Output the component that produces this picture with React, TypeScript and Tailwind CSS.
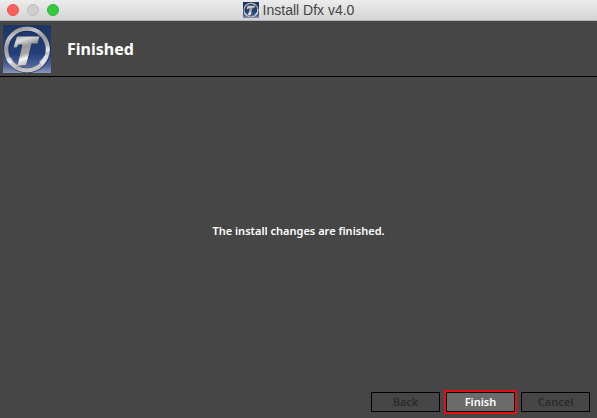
import { useId } from "react"

interface WizardButtonProps {
  label: string
  disabled?: boolean
}

function ProductLogo({ className }: { className: string }) {
  const id = useId()
  const sky = `${id}-sky`
  const ring = `${id}-ring`
  const letter = `${id}-letter`

  return (
    <svg className={className} viewBox="0 0 48 48" aria-hidden="true">
      <defs>
        <linearGradient id={sky} x1="0" y1="0" x2="0" y2="1">
          <stop offset="0" stopColor="#1c3563" />
          <stop offset="0.6" stopColor="#223f7c" />
          <stop offset="0.85" stopColor="#52649a" />
          <stop offset="1" stopColor="#8a97bd" />
        </linearGradient>
        <linearGradient id={ring} x1="0.1" y1="0" x2="0.4" y2="1">
          <stop offset="0" stopColor="#8b8d90" />
          <stop offset="0.2" stopColor="#c4c4c4" />
          <stop offset="0.4" stopColor="#96989a" />
          <stop offset="0.6" stopColor="#b2b3b5" />
          <stop offset="0.72" stopColor="#eeeeee" />
          <stop offset="0.82" stopColor="#a2a3a5" />
          <stop offset="1" stopColor="#c4c4c4" />
        </linearGradient>
        <linearGradient id={letter} x1="0" y1="0" x2="0.3" y2="1">
          <stop offset="0" stopColor="#a8a8a8" />
          <stop offset="0.2" stopColor="#dcdcdc" />
          <stop offset="0.42" stopColor="#999999" />
          <stop offset="0.66" stopColor="#a8a8a8" />
          <stop offset="0.8" stopColor="#f5f5f5" />
          <stop offset="1" stopColor="#bfbfbf" />
        </linearGradient>
      </defs>
      <rect width="48" height="48" fill={`url(#${sky})`} />
      <circle cx="24.3" cy="24.8" r="20.8" fill="none" stroke="#182b55" strokeWidth="5" />
      <circle cx="24" cy="24.5" r="20.8" fill="none" stroke={`url(#${ring})`} strokeWidth="4.2" />
      <path d="M3 34l5-2 3 5 4 3-3 3c-4-2-7-4-9-9z" fill="#e8e8e8" opacity="0.5" />
      <path d="M41 31l5-3c-1 6-4 10-7 12l-3-3c2-2 4-4 5-6z" fill="#f4f4f4" opacity="0.7" />
      <path d="M15 12h22l-2 7h-6l-5 18-1 3-8 1 5-21h-4l-3 3h-3z" fill="#182b55" />
      <path d="M14 11.5h22.5l-2 7h-6l-4.5 18-1 3.5-8.5 1 5-21.5h-4l-2 3h-3z" fill={`url(#${letter})`} />
    </svg>
  )
}

function WizardButton({ label, disabled = false }: WizardButtonProps) {
  return (
    <button
      type="button"
      disabled={disabled}
      className={`h-5 w-[69px] border border-black text-[11px] leading-4 font-semibold ${
        disabled ? "bg-[#464646] text-[#2c2c2c]" : "bg-[#6b6b6b] text-white outline-2 outline-[#e60e0e]"
      }`}
    >
      {label}
    </button>
  )
}

export default function App() {
  return (
    <div className="flex min-h-screen flex-col bg-[#464646] font-['Noto_Sans',sans-serif] text-white">
      <div className="grid h-[21px] grid-cols-[1fr_auto_1fr] items-center border-b border-[#b4b4b4] bg-linear-to-b from-[#ececec] to-[#d4d4d4] px-[7px]">
        <div className="flex gap-2">
          <button type="button" aria-label="Close" className="size-3 rounded-full border border-[#ed514b] bg-[#fc605b]" />
          <button type="button" aria-label="Minimize" className="size-3 rounded-full border border-[#bebebe] bg-[#cecdd0]" />
          <button type="button" aria-label="Zoom" className="size-3 rounded-full border border-[#2fb536] bg-[#34c93c]" />
        </div>
        <div className="flex items-center gap-1 font-['Liberation_Sans',sans-serif] text-sm leading-4 text-[#444444]">
          <ProductLogo className="size-4" />
          Install Dfx v4.0
        </div>
      </div>
      <header className="flex h-14 items-center gap-4 border-b border-black px-[3px]">
        <ProductLogo className="size-12" />
        <h1 className="text-base font-bold">Finished</h1>
      </header>
      <main className="flex flex-1 items-center justify-center pb-[6px] text-[11px] font-semibold">
        <p>The install changes are finished.</p>
      </main>
      <footer className="flex justify-end gap-[6px] px-[7px] pb-[6px]">
        <WizardButton label="Back" disabled />
        <WizardButton label="Finish" />
        <WizardButton label="Cancel" disabled />
      </footer>
    </div>
  )
}
